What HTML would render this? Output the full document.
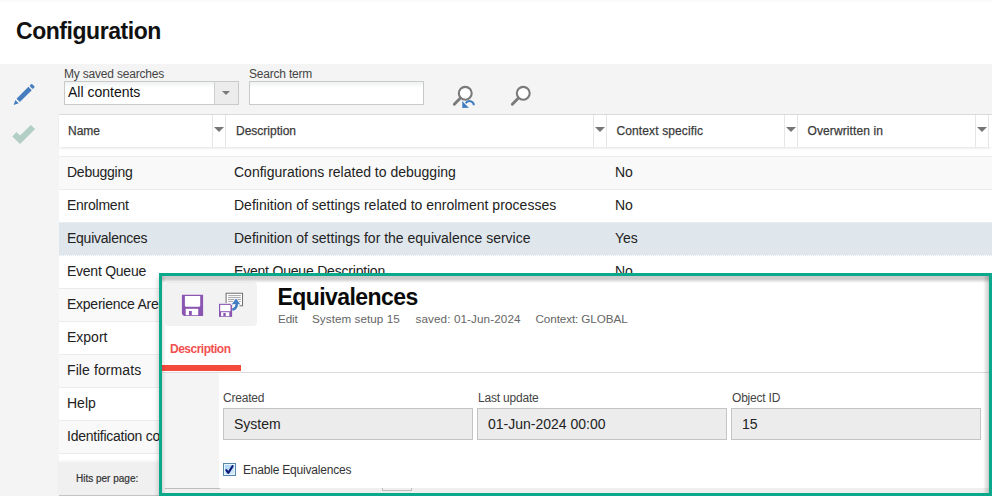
<!DOCTYPE html>
<html><head><meta charset="utf-8">
<style>
*{box-sizing:border-box;margin:0;padding:0}
html,body{width:992px;height:496px;overflow:hidden;background:#fff;font-family:"Liberation Sans",sans-serif;color:#222}
.abs{position:absolute}
.t{position:absolute;white-space:nowrap;line-height:1}
#topshadow{left:0;top:0;width:992px;height:3px;background:linear-gradient(#f8f8f8,#fff)}
#title{left:16px;top:19.5px;font-size:23px;font-weight:bold;color:#111;letter-spacing:-0.45px}
#band{left:0;top:64px;width:992px;height:432px;background:#f4f4f4}
.lbl{font-size:12px;color:#444;letter-spacing:-0.2px}
#sel{left:64px;top:81px;width:175px;height:24px;border:1px solid #c9c9c9;background:linear-gradient(#eef2f2,#fff 6px)}
#selarrow{left:149px;top:0;width:24px;height:22px;border-left:1px solid #cdcdcd;background:#ececec}
.tri{position:absolute;width:0;height:0;border-left:5px solid transparent;border-right:5px solid transparent;border-top:5px solid #767676}
#inp{left:249px;top:81px;width:175px;height:24px;border:1px solid #c9c9c9;background:linear-gradient(#eef2f2,#fff 6px)}
#thead{left:59px;top:114px;width:933px;height:33px;background:#fff;border-top:1px solid #dadada;box-shadow:0 2px 3px -1px rgba(0,0,0,0.13);z-index:2}
.hd{font-size:12px;color:#3a3a3a;-webkit-text-stroke:0.25px #3a3a3a;top:9.74px}
.vl{position:absolute;top:0;width:1px;height:32px;background:#e6e6e6}
#rows{left:59px;top:156px;width:933px}
.row{position:relative;height:33px;border-top:1px solid #ececec;background:#fff}
.row.odd{background:#f9f9f9}
.row.sel{background:#dfe6ec;border-top:1px dotted #dfe6ec;background-clip:padding-box}
.row.as{border-top:1px dotted #dfe6ec}
.row span{position:absolute;top:7.95px;font-size:14px;line-height:1;white-space:nowrap;color:#222}
#gap{left:59px;top:453px;width:933px;height:9px;background:#fff;border-top:1px solid #ebebeb}
#foot{left:59px;top:462px;width:933px;height:34px;background:#f0f0f0;box-shadow:0 -1px 3px rgba(0,0,0,0.06)}
#footline{left:59px;top:495px;width:933px;height:1px;background:#c4c4c4}
#modal{left:159px;top:273px;width:833px;height:223px;border:3px solid #0aa98b;background:#fff;overflow:hidden;box-shadow:-3px 3px 4px -1px rgba(0,0,0,0.13)}
#mshadow{left:0;top:0;width:827px;height:8px;background:linear-gradient(rgba(0,0,0,0.2),rgba(0,0,0,0.2) 3px,rgba(0,0,0,0) 7px);z-index:5}
#rshadow{right:0;top:0;width:6px;height:217px;background:linear-gradient(to left,rgba(0,0,0,0.2),rgba(0,0,0,0.17) 1px,rgba(0,0,0,0) 6px);z-index:5}
#lshadow{left:0;top:0;width:4px;height:217px;background:linear-gradient(to right,rgba(0,0,0,0.1),rgba(0,0,0,0) 4px);z-index:5}
#tool{left:3px;top:6px;width:92px;height:44px;background:#f2f2f2;border-radius:4px}
#mtitle{left:115.4px;top:10.3px;font-size:23px;font-weight:bold;color:#0a0a0a;letter-spacing:-0.55px}
.sub{font-size:11.7px;color:#666;top:36.9px;letter-spacing:-0.1px}
#tab{left:8px;top:66.74px;font-size:12px;font-weight:bold;color:#f25050;letter-spacing:-0.5px}
#tabbar{left:0;top:89px;width:79px;height:6px;background:#f44a3c}
#tabline{left:0;top:96px;width:827px;height:1px;background:#dcdcdc}
#side{left:0;top:97px;width:57px;height:118px;background:#f4f4f4}
.fl{font-size:12px;color:#444;top:115.64px;letter-spacing:-0.2px}
.fld{position:absolute;top:132px;height:32px;width:250px;background:#ececec;border:1px solid #c4c4c4}
.fld span{position:absolute;left:10px;top:7.85px;font-size:14px;line-height:1;color:#222;white-space:nowrap}
#cb{left:61px;top:187px;width:13px;height:13px;border:1px solid #5a86a8;background:linear-gradient(135deg,#a9d3f7,#d6ecfb);box-shadow:inset 0 0 0 1px #e6f5fe}
#cbl{left:81px;top:187.74px;font-size:12px;color:#333;letter-spacing:-0.2px}
#bstrip{left:0;top:212px;width:827px;height:5px;background:#efefef}
</style></head><body>
<div class="abs" id="topshadow"></div>
<div class="t" id="title">Configuration</div>
<div class="abs" id="band"></div>

<!-- left gutter icons -->
<svg class="abs" style="left:0;top:64px" width="59" height="100" viewBox="0 64 59 100">
  <g transform="translate(13.7,104.9) rotate(-45)" fill="#467dbe">
    <polygon points="0,0 4.7,-2.4 4.7,2.4"/>
    <rect x="6.3" y="-2.35" width="16.9" height="4.7"/>
    <rect x="24.6" y="-2.35" width="3.1" height="4.7" rx="0.9"/>
  </g>
  <polygon points="12.24,136.4 16.5,132.1 20.1,135.5 30.9,125 35.1,129 20.1,144" fill="#b2cec5"/>
</svg>

<div class="t lbl" style="left:64px;top:67.8px">My saved searches</div>
<div class="abs" id="sel">
  <div class="t" style="left:3px;top:3.05px;font-size:14px;color:#111">All contents</div>
  <div class="abs" id="selarrow"><div class="tri" style="left:6.6px;top:9px;border-top-color:#7a7a7a;border-left-width:4.7px;border-right-width:4.7px;border-top-width:4.8px"></div></div>
</div>
<div class="t lbl" style="left:249px;top:67.8px">Search term</div>
<div class="abs" id="inp"></div>

<svg class="abs" style="left:440px;top:78px" width="100" height="34" viewBox="440 78 100 34">
  <circle cx="465.25" cy="93.3" r="6.45" fill="#fff" stroke="#7a7a7a" stroke-width="2.1"/>
  <line x1="454.3" y1="104.2" x2="460.2" y2="98.3" stroke="#7a7a7a" stroke-width="2.9" stroke-linecap="round"/>
  <path d="M473.9,105.2 A4.4,4.4 0 0 0 465.7,103.3" fill="none" stroke="#3f7dc0" stroke-width="2"/>
  <polygon points="462.3,100.9 465.4,104.5 469,107.7 462.3,108" fill="#3f7dc0"/>
  <circle cx="523.25" cy="93.3" r="6.45" fill="#fff" stroke="#7a7a7a" stroke-width="2.1"/>
  <line x1="512.3" y1="104.2" x2="518.2" y2="98.3" stroke="#7a7a7a" stroke-width="2.9" stroke-linecap="round"/>
</svg>

<div class="abs" style="left:59px;top:147px;width:933px;height:10px;background:#fff"></div>
<div class="abs" id="thead">
  <div class="t hd" style="left:9px">Name</div>
  <div class="vl" style="left:153px"></div><div class="tri" style="left:155px;top:12px"></div><div class="vl" style="left:166px"></div>
  <div class="t hd" style="left:177px">Description</div>
  <div class="vl" style="left:534px"></div><div class="tri" style="left:536px;top:12px"></div><div class="vl" style="left:547px"></div>
  <div class="t hd" style="left:557.5px;letter-spacing:0.12px">Context specific</div>
  <div class="vl" style="left:725px"></div><div class="tri" style="left:727px;top:12px"></div><div class="vl" style="left:738px"></div>
  <div class="t hd" style="left:748.5px;letter-spacing:0.1px">Overwritten in</div>
  <div class="vl" style="left:916px"></div><div class="tri" style="left:918px;top:12px"></div><div class="vl" style="left:929px"></div>
</div>

<div class="abs" id="rows">
  <div class="row odd"><span style="left:8px;letter-spacing:-0.25px">Debugging</span><span style="left:175px">Configurations related to debugging</span><span style="left:556px">No</span></div>
  <div class="row"><span style="left:8px;letter-spacing:-0.25px">Enrolment</span><span style="left:175px">Definition of settings related to enrolment processes</span><span style="left:556px">No</span></div>
  <div class="row sel"><span style="left:8px;letter-spacing:-0.25px">Equivalences</span><span style="left:175px">Definition of settings for the equivalence service</span><span style="left:556px">Yes</span></div>
  <div class="row as"><span style="left:8px;letter-spacing:-0.25px">Event Queue</span><span style="left:175px;letter-spacing:-0.2px">Event Queue Description</span><span style="left:556px">No</span></div>
  <div class="row odd"><span style="left:8px;letter-spacing:-0.25px">Experience Area</span></div>
  <div class="row"><span style="left:8px">Export</span></div>
  <div class="row odd"><span style="left:8px;letter-spacing:0.1px">File formats</span></div>
  <div class="row"><span style="left:8px">Help</span></div>
  <div class="row odd"><span style="left:8px;letter-spacing:-0.25px">Identification codes</span></div>
</div>
<div class="abs" id="gap"></div>
<div class="abs" id="foot"><div class="t" style="left:17px;top:12.1px;font-size:10px;color:#333;-webkit-text-stroke:0.2px #333;letter-spacing:0px">Hits per page:</div></div>
<div class="abs" id="footline"></div>

<div class="abs" id="modal">
  <div class="abs" id="mshadow"></div><div class="abs" id="rshadow"></div><div class="abs" id="lshadow"></div>
  <div class="abs" id="tool">
    <svg class="abs" style="left:0;top:0" width="92" height="44" viewBox="165 282 92 44">
      <path d="M181.9,294.8 H203.1 V315.9 H183.9 L181.9,313.9 Z" fill="#8b56b2"/>
      <path d="M184.9,295.9 H200.2 V305.3 Q200.2,306.8 198.7,306.8 H186.4 Q184.9,306.8 184.9,305.3 Z" fill="#fff"/>
      <rect x="185.7" y="308.8" width="12.5" height="6.4" fill="#fff"/>
      <rect x="189" y="311" width="2.8" height="4.2" fill="#8b56b2"/>
      <rect x="226.1" y="293.3" width="16.4" height="12.4" fill="#fff"/>
      <path d="M226.1,303 V293.3 H242.5 V305.7 H239.5" fill="none" stroke="#707070" stroke-width="1.05"/>
      <g stroke="#9c9c9c" stroke-width="0.9"><line x1="228.1" y1="295.6" x2="240.8" y2="295.6"/><line x1="228.1" y1="297.6" x2="240.8" y2="297.6"/><line x1="228.1" y1="299.5" x2="240.8" y2="299.5"/><line x1="228.1" y1="301.4" x2="240.8" y2="301.4"/></g>
      <path d="M218.2,303 H232.9 V317.6 H218.2 Z" fill="#f2f2f2"/>
      <path d="M219,303.8 H232.1 V316.9 H219 Z" fill="#8b56b2"/>
      <rect x="220.2" y="304.9" width="10.3" height="6.3" fill="#fff"/>
      <rect x="221.1" y="312.2" width="8.2" height="4" fill="#fff"/>
      <rect x="223.3" y="313" width="2.4" height="3.2" fill="#8b56b2"/>
      <g stroke="#fff" stroke-linejoin="round">
        <path d="M236.7,303.5 C237,307.4 235.4,309 232.3,309.8" fill="none" stroke-width="4.2"/>
        <polygon points="231.6,304.4 236.1,298.6 240.4,304.4" fill="#fff" stroke-width="1.4"/>
      </g>
      <path d="M236.7,303.5 C237,307.4 235.4,309 232.3,309.8" fill="none" stroke="#3f7dc0" stroke-width="2.6"/>
      <polygon points="231.6,304.4 236.1,298.6 240.4,304.4 237.5,304 235.6,304" fill="#3f7dc0"/>
    </svg>
  </div>
  <div class="t" id="mtitle">Equivalences</div>
  <div class="t sub" style="left:116px">Edit</div>
  <div class="t sub" style="left:150px;letter-spacing:0.05px">System setup 15</div>
  <div class="t sub" style="left:253.5px;letter-spacing:0.1px">saved: 01-Jun-2024</div>
  <div class="t sub" style="left:373.5px">Context: GLOBAL</div>
  <div class="t" id="tab">Description</div>
  <div class="abs" id="tabbar"></div>
  <div class="abs" id="tabline"></div>
  <div class="abs" id="side"></div>
  <div class="t fl" style="left:61px">Created</div>
  <div class="t fl" style="left:316px">Last update</div>
  <div class="t fl" style="left:570px">Object ID</div>
  <div class="fld" style="left:61px"><span>System</span></div>
  <div class="fld" style="left:315px"><span>01-Jun-2024 00:00</span></div>
  <div class="fld" style="left:569px"><span>15</span></div>
  <div class="abs" id="cb"><svg width="11" height="11" viewBox="0 0 11 11" style="position:absolute;left:0;top:0"><path d="M2.3,6.2 L4.3,8.9 L8.6,2.1" fill="none" stroke="#0d1a78" stroke-width="2.1" stroke-linecap="round" stroke-linejoin="round"/></svg></div>
  <div class="t" id="cbl">Enable Equivalences</div>
  <div class="abs" id="bstrip"></div>
  <div class="abs" style="left:3px;top:212px;width:55px;height:1px;background:#bdbdbd"></div>
  <div class="abs" style="left:220px;top:212px;width:30px;height:3px;border:1px solid #bdbdbd;border-top:none"></div>
</div>
</body></html>
